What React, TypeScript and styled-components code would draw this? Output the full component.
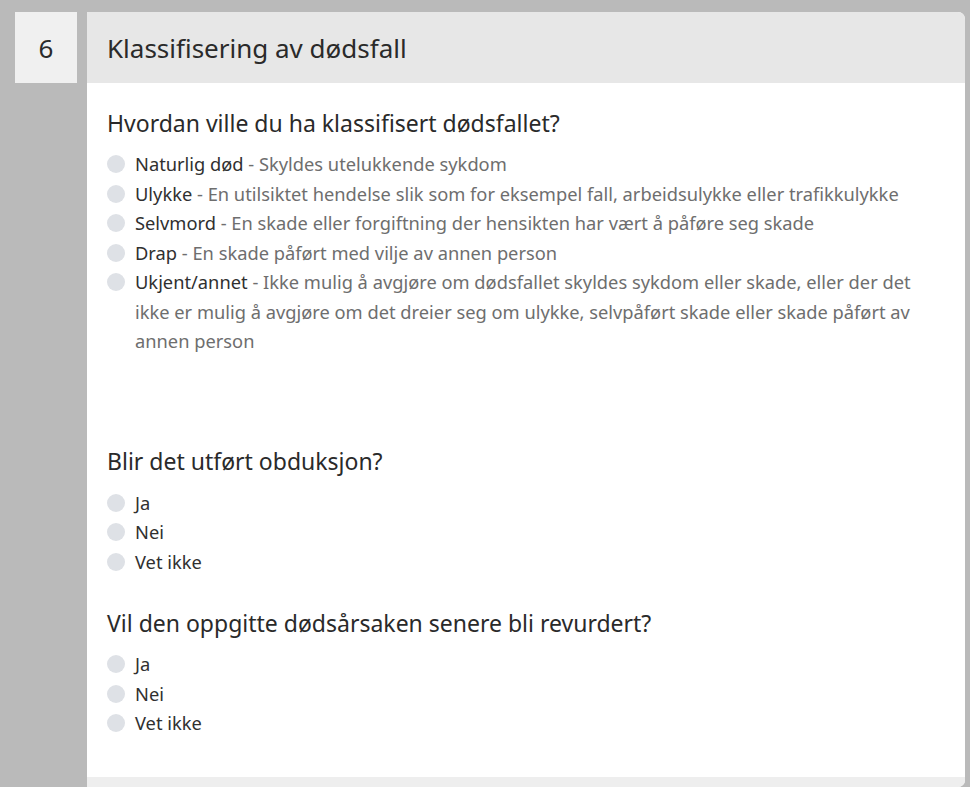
import styled, { createGlobalStyle } from "styled-components";

const GlobalStyle = createGlobalStyle`
  html, body {
    margin: 0;
    padding: 0;
    background: #bababa;
    font-family: "Noto Sans", "Open Sans", sans-serif;
    color: #212529;
  }
`;

type Option = { label: string; desc?: string };

const causeOptions: Option[] = [
  { label: "Naturlig død", desc: "Skyldes utelukkende sykdom" },
  {
    label: "Ulykke",
    desc: "En utilsiktet hendelse slik som for eksempel fall, arbeidsulykke eller trafikkulykke",
  },
  {
    label: "Selvmord",
    desc: "En skade eller forgiftning der hensikten har vært å påføre seg skade",
  },
  { label: "Drap", desc: "En skade påført med vilje av annen person" },
  {
    label: "Ukjent/annet",
    desc: "Ikke mulig å avgjøre om dødsfallet skyldes sykdom eller skade, eller der det ikke er mulig å avgjøre om det dreier seg om ulykke, selvpåført skade eller skade påført av annen person",
  },
];

const yesNo: Option[] = [{ label: "Ja" }, { label: "Nei" }, { label: "Vet ikke" }];

const Page = styled.div`
  display: flex;
  align-items: flex-start;
  gap: 10px;
  padding: 12px 5px 0 15px;
  height: 787px;
  box-sizing: border-box;
  overflow: hidden;
`;

const StepNumber = styled.div`
  width: 62px;
  height: 71px;
  flex-shrink: 0;
  background: #f0f0f0;
  display: flex;
  align-items: center;
  justify-content: center;
  font-size: 26px;
  color: #2a2a2a;
`;

const Card = styled.section`
  flex: 1;
  height: 775px;
  display: flex;
  flex-direction: column;
  background: #ffffff;
  border-radius: 0 7px 7px 0;
  overflow: hidden;
`;

const CardHeader = styled.header`
  height: 71px;
  flex-shrink: 0;
  background: #e7e7e7;
  display: flex;
  align-items: center;
  padding: 0 20px;
  font-size: 26px;
  color: #2a2a2a;
`;

const CardBody = styled.div`
  flex: 1;
  padding: 25px 20px 0 20px;
`;

const CardFooter = styled.div`
  height: 10px;
  flex-shrink: 0;
  background: #eeeeee;
`;

const Question = styled.fieldset<{ $gapAfter?: number }>`
  border: 0;
  margin: 0 0 ${(p) => p.$gapAfter ?? 0}px 0;
  padding: 0;
`;

const QuestionText = styled.legend<{ $space: number }>`
  padding: 0;
  font-size: 23px;
  line-height: 31px;
  color: #2a2a2a;
  margin-bottom: ${(p) => p.$space}px;
`;

const OptionRow = styled.label`
  display: flex;
  align-items: flex-start;
  gap: 10px;
  font-size: 18.3px;
  line-height: 29.5px;
  cursor: pointer;
`;

const Radio = styled.span`
  width: 18px;
  height: 18px;
  margin-top: 6px;
  flex-shrink: 0;
  border-radius: 50%;
  background: #dee1e6;
`;

const OptionText = styled.span`
  color: #6e6e6e;
  max-width: 810px;
`;

const Label = styled.span`
  color: #303030;
`;

const OptionList = ({ options }: { options: Option[] }) => (
  <>
    {options.map((o) => (
      <OptionRow key={o.label}>
        <Radio />
        <OptionText>
          <Label>{o.label}</Label>
          {o.desc ? ` - ${o.desc}` : null}
        </OptionText>
      </OptionRow>
    ))}
  </>
);

export default function App() {
  return (
    <>
      <GlobalStyle />
      <Page>
        <StepNumber>6</StepNumber>
        <Card>
          <CardHeader>Klassifisering av dødsfall</CardHeader>
          <CardBody>
            <Question $gapAfter={90}>
              <QuestionText $space={10}>Hvordan ville du ha klassifisert dødsfallet?</QuestionText>
              <OptionList options={causeOptions} />
            </Question>
            <Question $gapAfter={32}>
              <QuestionText $space={11}>Blir det utført obduksjon?</QuestionText>
              <OptionList options={yesNo} />
            </Question>
            <Question>
              <QuestionText $space={10}>Vil den oppgitte dødsårsaken senere bli revurdert?</QuestionText>
              <OptionList options={yesNo} />
            </Question>
          </CardBody>
          <CardFooter />
        </Card>
      </Page>
    </>
  );
}
